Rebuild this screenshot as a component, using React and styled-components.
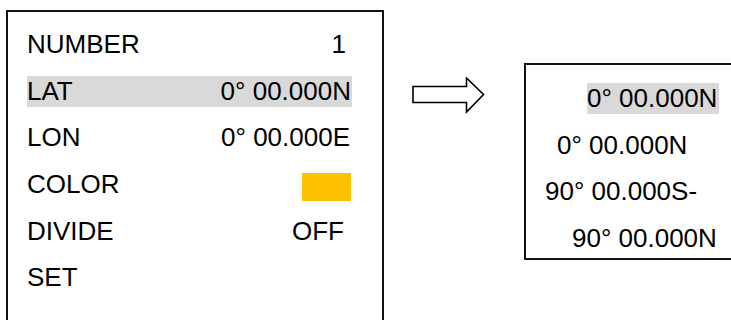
import React from "react";
import styled, { createGlobalStyle } from "styled-components";

const GlobalStyle = createGlobalStyle`
  html, body {
    margin: 0;
    padding: 0;
    background: #ffffff;
    overflow: hidden;
  }
  body {
    font-family: "Liberation Sans", Arial, sans-serif;
    color: #000000;
  }
`;

const Page = styled.div`
  display: flex;
  align-items: flex-start;
  width: 731px;
  height: 320px;
  overflow: hidden;
`;

const MenuPanel = styled.div`
  flex: none;
  margin: 10px 0 0 6px;
  width: 374px;
  height: 340px;
  border: 2px solid #111111;
  padding-top: 9px;
  box-sizing: content-box;
`;

const MenuList = styled.div`
  display: flex;
  flex-direction: column;
  margin-left: 19px;
  width: 325px;
`;

const MenuRow = styled.div`
  display: flex;
  align-items: center;
  justify-content: space-between;
  height: 31px;
  margin: 8px 0 7.7px;
  font-size: 26px;
  background: ${(p) => (p.$active ? "#d9d9d9" : "transparent")};
`;

const Label = styled.span`
  line-height: 31px;
`;

const Value = styled.span`
  line-height: 31px;
  padding-right: ${(p) => p.$pad || 0}px;
`;

const Swatch = styled.span`
  display: block;
  width: 49px;
  height: 28px;
  margin-right: 1px;
  margin-top: 4px;
  background: #ffc000;
`;

const ArrowWrap = styled.div`
  flex: none;
  margin: 77px 0 0 28px;
  width: 74px;
  height: 37px;
`;

const PickPanel = styled.div`
  flex: none;
  margin: 63px 0 0 38px;
  width: 260px;
  height: 183px;
  border: 2px solid #111111;
  border-right: none;
  padding-top: 10px;
`;

const PickList = styled.div`
  display: flex;
  flex-direction: column;
  align-items: flex-start;
`;

const PickRow = styled.div`
  height: 31px;
  line-height: 31px;
  margin: 8px 0 7.7px ${(p) => p.$indent}px;
  padding-right: 2px;
  font-size: 26px;
  white-space: nowrap;
  background: ${(p) => (p.$active ? "#d9d9d9" : "transparent")};
`;

const Arrow = () => (
  <svg width="74" height="37" viewBox="0 0 74 37">
    <polygon
      points="1,9.5 54.5,9.5 54.5,1 71.5,17.5 54.5,35 54.5,25.5 1,25.5"
      fill="#ffffff"
      stroke="#000000"
      strokeWidth="1.6"
      strokeLinejoin="miter"
    />
  </svg>
);

const menu = [
  { label: "NUMBER", value: "1", pad: 6 },
  { label: "LAT", value: "0° 00.000N", pad: 1, active: true },
  { label: "LON", value: "0° 00.000E", pad: 2 },
  { label: "COLOR", swatch: true },
  { label: "DIVIDE", value: "OFF", pad: 8 },
  { label: "SET" },
];

const choices = [
  { text: "0° 00.000N", indent: 61, active: true },
  { text: "0° 00.000N", indent: 31 },
  { text: "90° 00.000S-", indent: 19 },
  { text: "90° 00.000N", indent: 46 },
];

export default function App() {
  return (
    <>
      <GlobalStyle />
      <Page>
        <MenuPanel>
          <MenuList>
            {menu.map((item) => (
              <MenuRow key={item.label} $active={item.active}>
                <Label>{item.label}</Label>
                {item.swatch ? (
                  <Swatch />
                ) : (
                  item.value && <Value $pad={item.pad}>{item.value}</Value>
                )}
              </MenuRow>
            ))}
          </MenuList>
        </MenuPanel>
        <ArrowWrap>
          <Arrow />
        </ArrowWrap>
        <PickPanel>
          <PickList>
            {choices.map((c, i) => (
              <PickRow key={i} $indent={c.indent} $active={c.active}>
                {c.text}
              </PickRow>
            ))}
          </PickList>
        </PickPanel>
      </Page>
    </>
  );
}
